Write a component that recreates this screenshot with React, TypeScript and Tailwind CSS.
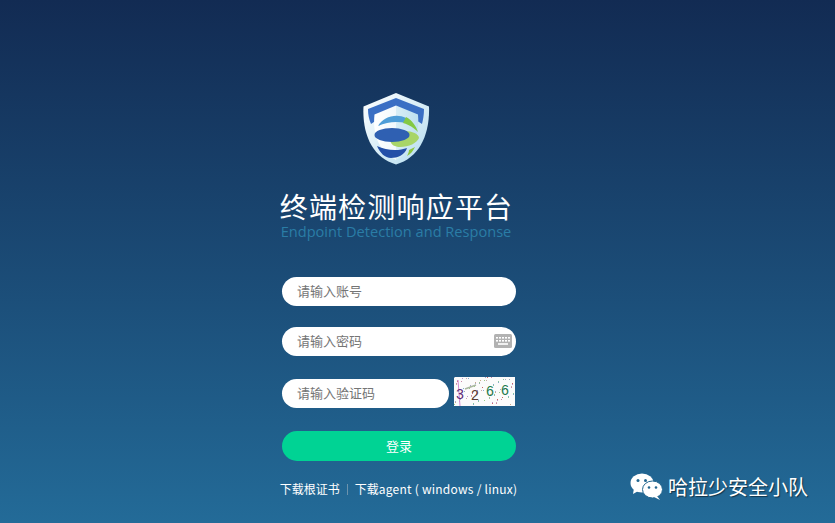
import React from "react";

const cjk = '"Noto Sans CJK SC", "Liberation Sans", sans-serif';

const ShieldLogo = () => (
  <svg width="67" height="72" viewBox="0 0 67 72" className="block">
    <defs>
      <linearGradient id="rim" x1="0" y1="0" x2="1" y2="1">
        <stop offset="0" stopColor="#ffffff" />
        <stop offset="1" stopColor="#b4dcef" />
      </linearGradient>
      <linearGradient id="inner" x1="0" y1="0" x2="1" y2="0">
        <stop offset="0" stopColor="#ffffff" />
        <stop offset="0.5" stopColor="#f2f9fc" />
        <stop offset="0.5" stopColor="#d8eef6" />
        <stop offset="1" stopColor="#bde0f0" />
      </linearGradient>
    </defs>
    <path d="M33 0 L66 13.5 C67 42 56 65 33 71.5 C10 65 -1 42 0.5 13.5 Z" fill="url(#rim)" />
    <path d="M33 5 L61 16 C61 22 60 27 59 31 L33 14 L8 31 C6 26 5 22 5 16 Z" fill="#3a6fc4" />
    <path d="M33 12.5 L55 21.5 C57 44 48 60 33 67 C18 60 9 44 11.5 21.5 Z" fill="url(#inner)" />
    <path d="M15 33 C20 24 33 20 43 25 L43 30 C33 28 24 29 15 33 Z" fill="#4f9ed8" />
    <path d="M43 24 C49 27 53 33 55 39 C51 35 47 32 40 30 Z" fill="#83c944" />
    <path d="M27 47 C38 49 46 44 42 38 C49 38 56 41 56 45 C54 50 46 54 37 54 C32 54 28 52 27 47 Z" fill="#a8d568" />
    <ellipse cx="29" cy="42" rx="17.5" ry="7" fill="#2f60b2" />
    <path d="M14 53 C24 58 36 58 44 55 C42 62 34 65 28 65 C22 65 17 60 14 53 Z" fill="#2450a8" />
    <path d="M46 57 L52 54 C50 58 48 61 44 63 C45 61 46 59 46 57 Z" fill="#8cc63f" />
  </svg>
);

const KeyboardIcon = () => (
  <svg width="18" height="14" viewBox="0 0 18 14" className="block">
    <rect width="18" height="14" rx="1.5" fill="#b2b2b2" />
    <g fill="#ffffff">
      <rect x="2" y="3" width="2" height="1.6" />
      <rect x="5" y="3" width="2" height="1.6" />
      <rect x="8" y="3" width="2" height="1.6" />
      <rect x="11" y="3" width="2" height="1.6" />
      <rect x="14" y="3" width="2" height="1.6" />
      <rect x="2" y="6" width="2" height="1.6" />
      <rect x="5" y="6" width="2" height="1.6" />
      <rect x="8" y="6" width="2" height="1.6" />
      <rect x="11" y="6" width="2" height="1.6" />
      <rect x="14" y="6" width="2" height="1.6" />
      <rect x="4" y="9.2" width="10" height="1.6" />
    </g>
  </svg>
);

// speckle for the captcha, fixed so the picture stays the same
const speckColors = ["#9ab", "#c8a", "#8c9", "#aac", "#c66", "#9c8", "#caa", "#8ac", "#ca8", "#b9c"];
const specks = Array.from({ length: 90 }, (_, i) => ({
  x: (i * 37 + (i % 7) * 5) % 60,
  y: (i * 23 + (i % 5) * 3) % 28,
  c: speckColors[i % speckColors.length],
}));

const Captcha = () => (
  <svg width="61" height="29" viewBox="0 0 61 29" className="block">
    <rect width="61" height="29" fill="#fbfbfb" />
    {specks.map((s, i) => (
      <rect key={i} x={s.x} y={s.y} width="1" height="1" fill={s.c} />
    ))}
    <path d="M4 3 L6 29" stroke="#d58ad0" strokeWidth="1" />
    <path d="M11 12 L22 8" stroke="#a9b8a0" strokeWidth="1.5" />
    <g fontFamily='"Liberation Mono", monospace' fontSize="14" textAnchor="middle">
      <text x="6" y="22" fill="#5b2a78">3</text>
      <text x="21" y="23" fill="#5a3a30">2</text>
      <text x="36" y="19" fill="#1e7a4e">6</text>
      <text x="51" y="18" fill="#1e7a4e">6</text>
    </g>
  </svg>
);

const WechatIcon = () => (
  <svg width="33" height="27" viewBox="0 0 33 27" className="block">
    <ellipse cx="12" cy="10" rx="11.5" ry="9.5" fill="#ffffff" />
    <path d="M4 15 L3 21 L10 17 Z" fill="#ffffff" />
    <ellipse cx="22.5" cy="16.5" rx="10" ry="8.5" fill="#ffffff" stroke="#236790" strokeWidth="1" />
    <path d="M27 23 L30 27 L24 24 Z" fill="#ffffff" />
    <circle cx="8" cy="7.5" r="1.5" fill="#236790" />
    <circle cx="15.5" cy="7.5" r="1.5" fill="#236790" />
    <circle cx="19" cy="14.5" r="1.3" fill="#236790" />
    <circle cx="26" cy="14.5" r="1.3" fill="#236790" />
  </svg>
);

const App: React.FC = () => {
  return (
    <div
      className="relative h-[523px] w-[835px] overflow-hidden bg-gradient-to-b from-[#122b53] to-[#236b98]"
      style={{ fontFamily: cjk }}
    >
      <div className="flex flex-col items-center pt-[93px] pr-[37px]">
        {/* Logo */}
        <div className="ml-[-5px]">
          <ShieldLogo />
        </div>

        {/* Title */}
        <h1 className="mt-[24px] ml-[-5px] h-[34px] whitespace-nowrap text-[28px] leading-[34px] tracking-[1.2px] font-normal text-white">
          终端检测响应平台
        </h1>
        <p
          className="ml-[-6px] h-[20px] whitespace-nowrap text-[14.6px] leading-[17px] text-[#2a7da6]"
          style={{ fontFamily: '"Open Sans", sans-serif' }}
        >
          Endpoint Detection and Response
        </p>

        {/* Form */}
        <div className="mt-[34px] flex w-[234px] flex-col">
          <div className="flex h-[29px] items-center rounded-full bg-white px-[15px] pb-px">
            <span className="text-[13px] text-[#757575]">请输入账号</span>
          </div>
          <div className="mt-[21px] flex h-[29px] items-center justify-between rounded-full bg-white pr-[4px] pl-[15px] pb-px">
            <span className="text-[13px] text-[#757575]">请输入密码</span>
            <KeyboardIcon />
          </div>
          <div className="mt-[21px] flex h-[31px] items-start">
            <div className="mt-[2px] flex h-[29px] w-[167px] items-center rounded-full bg-white px-[15px] pb-px">
              <span className="text-[13px] text-[#757575]">请输入验证码</span>
            </div>
            <div className="ml-[5px]">
              <Captcha />
            </div>
          </div>
          <button className="mt-[23px] flex h-[30px] items-center justify-center rounded-full bg-[#00d394] pb-px text-[13px] text-white">
            <span>登录</span>
          </button>
        </div>

        {/* Links */}
        <div className="mt-[19px] ml-[-1px] flex h-[18px] items-center whitespace-nowrap text-[12px] text-white">
          <span>下载根证书</span>
          <span className="mx-[7px] h-[11px] w-px bg-[#6c93ad]" />
          <span>
            下载<span className="tracking-[0.24px]">agent ( windows / linux)</span>
          </span>
        </div>
      </div>

      {/* WeChat watermark */}
      <div className="absolute top-[473px] left-[630px] flex items-center">
        <WechatIcon />
        <span className="ml-[5px] whitespace-nowrap text-[20px] leading-[27px] text-white [text-shadow:1px_1px_1px_rgba(0,0,0,0.5)]">
          哈拉少安全小队
        </span>
      </div>
    </div>
  );
};

export default App;
